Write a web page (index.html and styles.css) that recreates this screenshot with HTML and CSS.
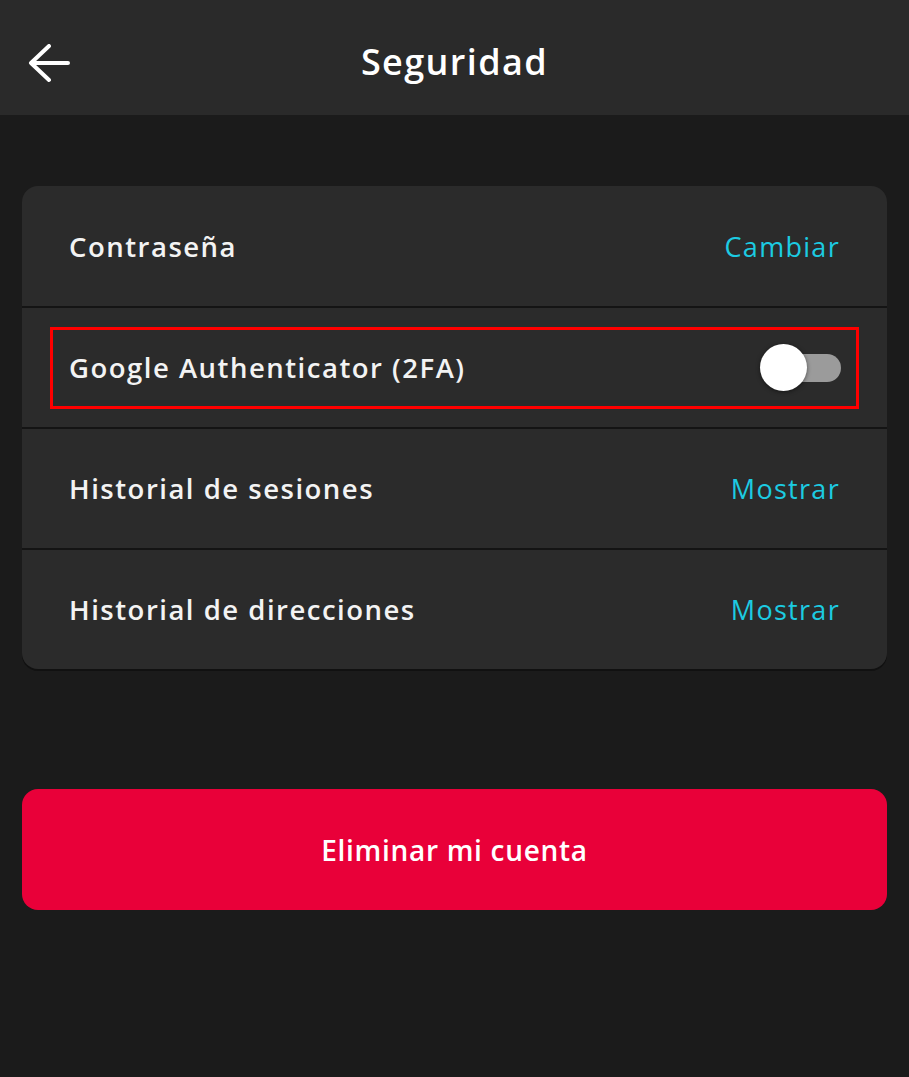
FILE: index.html
```html
<!DOCTYPE html>
<html lang="es">
<head>
  <meta charset="UTF-8">
  <meta name="viewport" content="width=device-width, initial-scale=1.0">
  <title>Seguridad</title>
  <link rel="stylesheet" href="styles.css">
</head>
<body>
  <header class="topbar">
    <button class="back" aria-label="Volver">
      <svg width="42" height="40" viewBox="0 0 42 40">
        <path d="M40 19H4M21 2L3 19l18 17" fill="none" stroke="#fff" stroke-width="4" stroke-linecap="round" stroke-linejoin="round"/>
      </svg>
    </button>
    <h1>Seguridad</h1>
  </header>

  <main>
    <div class="card">
      <div class="row">
        <span class="label">Contraseña</span>
        <a class="action">Cambiar</a>
      </div>
      <div class="row">
        <div class="highlight">
          <span class="label">Google Authenticator (2FA)</span>
          <span class="switch"><span class="thumb"></span></span>
        </div>
      </div>
      <div class="row">
        <span class="label">Historial de sesiones</span>
        <a class="action">Mostrar</a>
      </div>
      <div class="row">
        <span class="label">Historial de direcciones</span>
        <a class="action">Mostrar</a>
      </div>
    </div>

    <button class="danger">Eliminar mi cuenta</button>
  </main>
</body>
</html>
```

FILE: styles.css
```css
body {
  margin: 0;
  background-color: #1b1b1b;
  color: #f4f4f4;
  font-family: "Open Sans", sans-serif;
  height: 1077px;
}
.topbar {
  height: 115px;
  box-sizing: border-box;
  padding-top: 8px;
  background-color: #2a2a2a;
  display: flex;
  align-items: center;
  justify-content: center;
  position: relative;
}
.topbar h1 {
  margin: 0;
  font-size: 36px;
  font-weight: 600;
  color: #fff;
  letter-spacing: 1.4px;
}
.back {
  position: absolute;
  left: 28px;
  top: 44px;
  background: none;
  border: none;
  padding: 0;
  line-height: 0;
}
main {
  padding: 71px 22px 0;
}
.card {
  background-color: #2b2b2b;
  border-radius: 16px;
  overflow: hidden;
  box-shadow: 0 2px 0 #111;
}
.row {
  height: 121px;
  display: flex;
  align-items: center;
  justify-content: space-between;
  padding: 0 47px;
  border-top: 2px solid #141414;
  box-sizing: border-box;
}
.row:first-child {
  border-top: none;
  height: 120px;
}
.row:nth-child(2) {
  padding: 0 28px;
}
.label {
  font-size: 27.5px;
  font-weight: 600;
  color: #f3f3f3;
  letter-spacing: 1.5px;
}
.action {
  font-size: 27px;
  color: #1ccbe2;
  letter-spacing: 1.3px;
}
.highlight {
  flex: 1;
  height: 82px;
  border: 3px solid #ff0000;
  box-sizing: border-box;
  display: flex;
  align-items: center;
  justify-content: space-between;
  padding: 0 15px 0 16px;
}
.switch {
  position: relative;
  width: 70px;
  height: 28px;
  display: flex;
  justify-content: flex-end;
}
.switch::before {
  content: "";
  width: 52px;
  height: 28px;
  border-radius: 14px;
  background-color: #9b9b9b;
}
.thumb {
  position: absolute;
  left: -11px;
  top: -10px;
  width: 47px;
  height: 47px;
  border-radius: 50%;
  background-color: #fff;
  box-shadow: 0 1px 4px rgba(0,0,0,0.5);
}
.danger {
  display: block;
  width: 100%;
  height: 121px;
  margin-top: 120px;
  background-color: #e90039;
  color: #fff;
  border: none;
  border-radius: 16px;
  font-family: "Open Sans", sans-serif;
  font-size: 28px;
  font-weight: 600;
  letter-spacing: 0.7px;
}
```
